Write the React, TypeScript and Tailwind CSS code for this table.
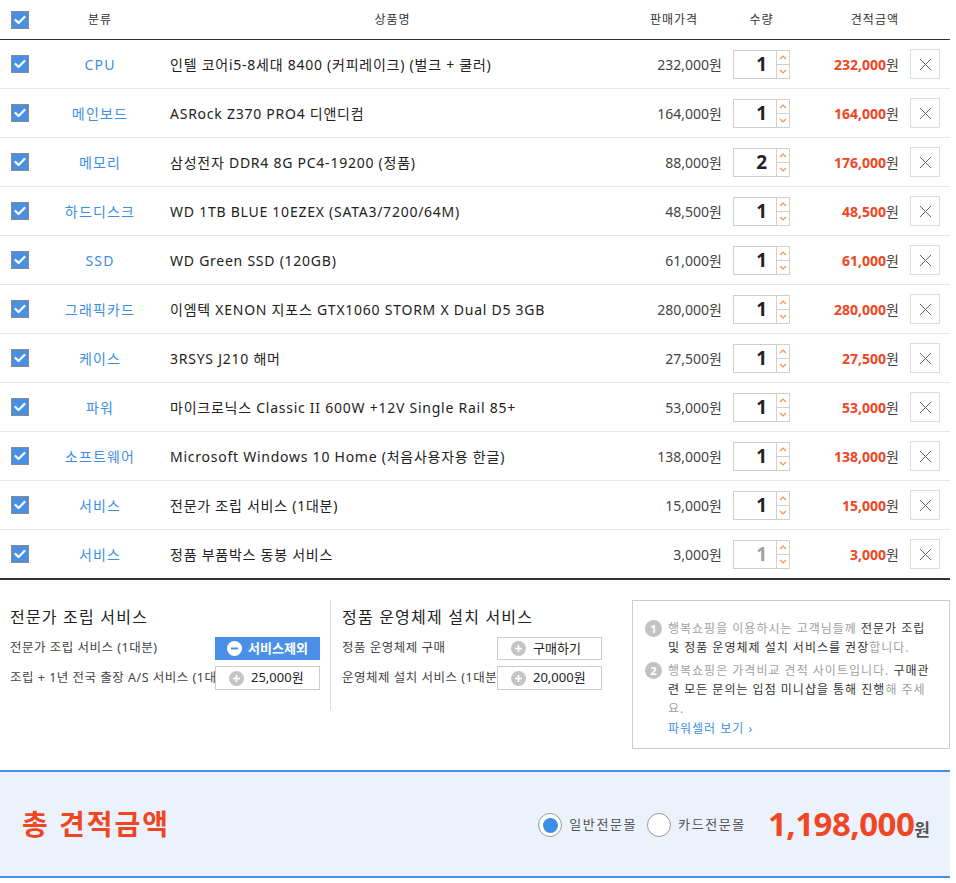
import React from 'react';

type Row = { cat: string; name: string; price: string; qty: number; total: string; disabled?: boolean };

const rows: Row[] = [
  { cat: 'CPU', name: '인텔 코어i5-8세대 8400 (커피레이크) (벌크 + 쿨러)', price: '232,000', qty: 1, total: '232,000' },
  { cat: '메인보드', name: 'ASRock Z370 PRO4 디앤디컴', price: '164,000', qty: 1, total: '164,000' },
  { cat: '메모리', name: '삼성전자 DDR4 8G PC4-19200 (정품)', price: '88,000', qty: 2, total: '176,000' },
  { cat: '하드디스크', name: 'WD 1TB BLUE 10EZEX (SATA3/7200/64M)', price: '48,500', qty: 1, total: '48,500' },
  { cat: 'SSD', name: 'WD Green SSD (120GB)', price: '61,000', qty: 1, total: '61,000' },
  { cat: '그래픽카드', name: '이엠텍 XENON 지포스 GTX1060 STORM X Dual D5 3GB', price: '280,000', qty: 1, total: '280,000' },
  { cat: '케이스', name: '3RSYS J210 해머', price: '27,500', qty: 1, total: '27,500' },
  { cat: '파워', name: '마이크로닉스 Classic II 600W +12V Single Rail 85+', price: '53,000', qty: 1, total: '53,000' },
  { cat: '소프트웨어', name: 'Microsoft Windows 10 Home (처음사용자용 한글)', price: '138,000', qty: 1, total: '138,000' },
  { cat: '서비스', name: '전문가 조립 서비스 (1대분)', price: '15,000', qty: 1, total: '15,000' },
  { cat: '서비스', name: '정품 부품박스 동봉 서비스', price: '3,000', qty: 1, total: '3,000', disabled: true },
];

const font = { fontFamily: '"Noto Sans", "Noto Sans CJK KR", sans-serif' };

function Check() {
  return (
    <div className="w-[18px] h-[18px] bg-[#4a90e2] border border-[#8a8a8a] flex items-center justify-center">
      <svg width="12" height="10" viewBox="0 0 12 10">
        <polyline points="1.5,5 4.5,8 10.5,2" fill="none" stroke="#fff" strokeWidth="2.2" strokeLinecap="round" strokeLinejoin="round" />
      </svg>
    </div>
  );
}

function Qty({ n, disabled }: { n: number; disabled?: boolean }) {
  return (
    <div className="flex w-[57px] h-[29px] border border-[#cfcfcf] bg-white">
      <div className={`flex-1 flex items-center justify-end pr-[9px] text-[19px] font-bold ${disabled ? 'text-[#a0a0a0]' : 'text-[#222]'}`}>{n}</div>
      <div className="w-[13px] border-l border-[#cfcfcf] flex flex-col">
        <div className="flex-1 flex items-center justify-center border-b border-[#cfcfcf]">
          <svg width="8" height="5" viewBox="0 0 8 5"><polyline points="1,4 4,1 7,4" fill="none" stroke="#f4924d" strokeWidth="1.2" /></svg>
        </div>
        <div className="flex-1 flex items-center justify-center">
          <svg width="8" height="5" viewBox="0 0 8 5"><polyline points="1,1 4,4 7,1" fill="none" stroke="#f4924d" strokeWidth="1.2" /></svg>
        </div>
      </div>
    </div>
  );
}

function XBtn() {
  return (
    <div className="w-[30px] h-[30px] border border-[#dcdcdc] bg-white flex items-center justify-center">
      <svg width="13" height="13" viewBox="0 0 13 13">
        <line x1="1" y1="1" x2="12" y2="12" stroke="#666" strokeWidth="1" />
        <line x1="12" y1="1" x2="1" y2="12" stroke="#666" strokeWidth="1" />
      </svg>
    </div>
  );
}

function PlusCircle() {
  return (
    <span className="w-[15px] h-[15px] rounded-full bg-[#c4c4c4] flex items-center justify-center shrink-0">
      <svg width="9" height="9" viewBox="0 0 9 9">
        <line x1="4.5" y1="1" x2="4.5" y2="8" stroke="#fff" strokeWidth="1.6" />
        <line x1="1" y1="4.5" x2="8" y2="4.5" stroke="#fff" strokeWidth="1.6" />
      </svg>
    </span>
  );
}

function MinusCircle() {
  return (
    <span className="w-[15px] h-[15px] rounded-full bg-white flex items-center justify-center shrink-0">
      <svg width="9" height="9" viewBox="0 0 9 9">
        <line x1="1" y1="4.5" x2="8" y2="4.5" stroke="#4a90e8" strokeWidth="2" />
      </svg>
    </span>
  );
}

function NumCircle({ n }: { n: number }) {
  return (
    <span className="w-[17px] h-[17px] rounded-full bg-[#c2c2c2] text-white text-[11px] font-bold flex items-center justify-center shrink-0 mt-[1px] tracking-normal">{n}</span>
  );
}

const grid = 'grid grid-cols-[40px_120px_465px_98px_77px_100px_50px]';

export default function App() {
  return (
    <div className="w-[956px] h-[883px] bg-white text-[#333] overflow-hidden" style={font}>
      <div className="w-[950px]">
        {/* Header */}
        <div className={`${grid} h-[40px] border-b border-[#333] items-center text-[12px] text-[#333] tracking-[1px]`}>
          <div className="flex justify-center"><Check /></div>
          <div className="text-center">분류</div>
          <div className="text-center">상품명</div>
          <div className="text-center">판매가격</div>
          <div className="text-center">수량</div>
          <div className="text-right pr-[1px]">견적금액</div>
          <div />
        </div>
        {rows.map((r, i) => (
          <div
            key={i}
            className={`${grid} items-center ${i === rows.length - 1 ? 'h-[50px] border-b-2 border-[#333]' : 'h-[49px] border-b border-[#e6e6e6]'}`}
          >
            <div className="flex justify-center"><Check /></div>
            <div className="text-center text-[14px] text-[#3d8ee6] tracking-[1.2px]">{r.cat}</div>
            <div className="pl-[10px] text-[14px] text-[#222] whitespace-nowrap tracking-[0.75px]">{r.name}</div>
            <div className="text-right pr-[1px] text-[14px] text-[#444]">{r.price}원</div>
            <div className="flex justify-center"><Qty n={r.qty} disabled={r.disabled} /></div>
            <div className="text-right pr-[1px] text-[14px] font-bold text-[#f04623]">
              {r.total}<span className="font-normal text-[#444]">원</span>
            </div>
            <div className="flex justify-center"><XBtn /></div>
          </div>
        ))}

        {/* Services */}
        <div className="flex items-start pt-[20px]">
          <div className="w-[330px] pl-[10px] pt-[7px]">
            <div className="text-[16px] leading-[20px] text-[#222] tracking-[1.2px]">전문가 조립 서비스</div>
            <div className="mt-[10px] flex items-center h-[23px]">
              <div className="w-[205px] shrink-0 overflow-hidden whitespace-nowrap text-[12.5px] text-[#444] tracking-[0.5px]">전문가 조립 서비스 (1대분)</div>
              <div className="w-[105px] h-[23px] bg-[#4a90e8] flex items-center justify-center gap-[6px] text-[13px] font-bold text-white">
                <MinusCircle />서비스제외
              </div>
            </div>
            <div className="mt-[6px] flex items-center h-[24px]">
              <div className="w-[205px] shrink-0 overflow-hidden whitespace-nowrap text-[12.5px] text-[#444] tracking-[0.5px]">조립 + 1년 전국 출장 A/S 서비스 (1대분)</div>
              <div className="w-[105px] h-[24px] border border-[#cccccc] bg-white flex items-center pl-[13px] gap-[7px] text-[13px] text-[#222]">
                <PlusCircle />25,000원
              </div>
            </div>
          </div>
          <div className="w-[302px] h-[110px] border-l border-[#dddddd] pl-[11px] pt-[7px]">
            <div className="text-[16px] leading-[20px] text-[#222] tracking-[1.2px]">정품 운영체제 설치 서비스</div>
            <div className="mt-[10px] flex items-center h-[23px]">
              <div className="w-[155px] shrink-0 overflow-hidden whitespace-nowrap text-[12.5px] text-[#444] tracking-[0.5px]">정품 운영체제 구매</div>
              <div className="w-[105px] h-[23px] border border-[#cccccc] bg-white flex items-center pl-[13px] gap-[7px] text-[13px] text-[#222]">
                <PlusCircle />구매하기
              </div>
            </div>
            <div className="mt-[6px] flex items-center h-[24px]">
              <div className="w-[155px] shrink-0 overflow-hidden whitespace-nowrap text-[12.5px] text-[#444] tracking-[0.5px]">운영체제 설치 서비스 (1대분)</div>
              <div className="w-[105px] h-[24px] border border-[#cccccc] bg-white flex items-center pl-[13px] gap-[7px] text-[13px] text-[#222]">
                <PlusCircle />20,000원
              </div>
            </div>
          </div>
          <div className="w-[318px] h-[149px] border border-[#cccccc] pl-[12px] pt-[18px] text-[12px] leading-[19px]">
            <div className="flex gap-[6px]">
              <NumCircle n={1} />
              <div className="w-[265px] text-[#a0a0a0] break-all tracking-[1px]">
                행복쇼핑을 이용하시는 고객님들께 <span className="text-[#333]">전문가 조립 및 정품 운영체제 설치 서비스를 권장</span>합니다.
              </div>
            </div>
            <div className="flex gap-[6px] mt-[4px]">
              <NumCircle n={2} />
              <div className="w-[265px] text-[#a0a0a0] break-all tracking-[1px]">
                행복쇼핑은 가격비교 견적 사이트입니다. <span className="text-[#333]">구매관련 모든 문의는 입점 미니샵을 통해 진행</span>해 주세요.
              </div>
            </div>
            <div className="pl-[23px] mt-[1px] text-[#3d8ee6] tracking-[1px]">파워셀러 보기 ›</div>
          </div>
        </div>

        {/* Total */}
        <div className="mt-[21px] h-[108px] border-t-2 border-b-2 border-[#4a8fe7] bg-[#ebf2fc] flex items-center pl-[22px] pr-[20px]">
          <div className="text-[28px] font-bold text-[#f04623] tracking-[2px]">총 견적금액</div>
          <div className="flex-1" />
          <div className="flex items-center gap-[7px] mt-[2px]">
            <span className="w-[24px] h-[24px] rounded-full border border-[#999] bg-white flex items-center justify-center">
              <span className="w-[15px] h-[15px] rounded-full bg-[#3d8ee6]" />
            </span>
            <span className="text-[13px] text-[#555] tracking-[1.6px]">일반전문몰</span>
            <span className="ml-[3px] w-[24px] h-[24px] rounded-full border border-[#999] bg-white" />
            <span className="text-[13px] text-[#555] tracking-[1.6px]">카드전문몰</span>
          </div>
          <div className="ml-[22px] flex items-baseline">
            <span className="text-[33px] font-bold text-[#f04623] tracking-[-0.5px]">1,198,000</span>
            <span className="text-[17px] font-bold text-[#555]">원</span>
          </div>
        </div>
      </div>
    </div>
  );
}
